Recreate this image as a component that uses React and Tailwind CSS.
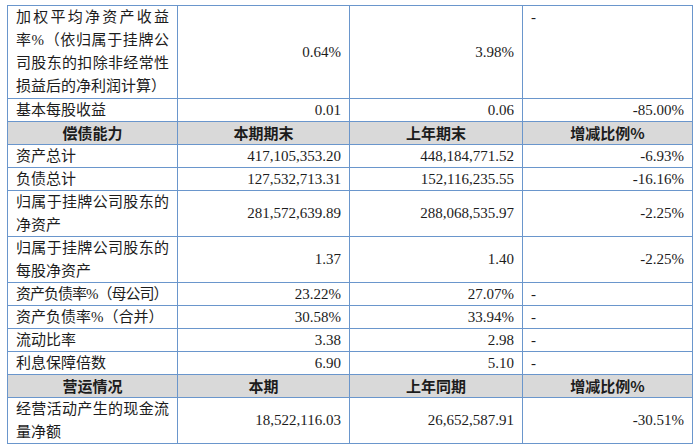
import React from "react";

const cell = "border border-[#6a96cc] px-[8px] py-0";
const num = `${cell} text-right align-middle`;

const rows = [
  { label: "基本每股收益", a: "0.01", b: "0.06", c: "-85.00%" },
];

const debt = [
  { label: "资产总计", a: "417,105,353.20", b: "448,184,771.52", c: "-6.93%" },
  { label: "负债总计", a: "127,532,713.31", b: "152,116,235.55", c: "-16.16%" },
  { label: "归属于挂牌公司股东的净资产", a: "281,572,639.89", b: "288,068,535.97", c: "-2.25%", two: true },
  { label: "归属于挂牌公司股东的每股净资产", a: "1.37", b: "1.40", c: "-2.25%", two: true },
  { label: "资产负债率%（母公司）", a: "23.22%", b: "27.07%", c: "-", tight: true },
  { label: "资产负债率%（合并）", a: "30.58%", b: "33.94%", c: "-" },
  { label: "流动比率", a: "3.38", b: "2.98", c: "-" },
  { label: "利息保障倍数", a: "6.90", b: "5.10", c: "-" },
];

const Row = ({ r }) => {
  const lead = r.two ? "leading-[22.5px]" : "leading-[22px]";
  const dash = r.c === "-";
  return (
    <tr>
      <td
        className={`${cell} ${lead} text-justify ${
          r.tight ? "whitespace-nowrap tracking-[-1px]" : ""
        }`}
      >
        {r.label}
      </td>
      <td className={`${num} ${lead}`}>{r.a}</td>
      <td className={`${num} ${lead}`}>{r.b}</td>
      <td className={`${cell} ${lead} align-middle ${dash ? "text-left" : "text-right"}`}>
        {r.c}
      </td>
    </tr>
  );
};

const Head = ({ cols }) => (
  <tr className="bg-[#d9d9d9]">
    {cols.map((c) => (
      <td
        key={c}
        className={`${cell} leading-[22px] text-center font-bold font-['Noto_Sans_CJK_SC',sans-serif] text-[15px]`}
      >
        {c}
      </td>
    ))}
  </tr>
);

export default function App() {
  return (
    <div className="w-[698px] h-[445px] bg-white pl-[7px] pt-[5px] overflow-hidden">
      <table className="w-[685px] table-fixed border-collapse text-[15px] text-[#1c1c1c] font-['Liberation_Serif','Noto_Sans_CJK_SC',serif]">
        <colgroup>
          <col className="w-[170px]" />
          <col className="w-[172px]" />
          <col className="w-[173px]" />
          <col className="w-[170px]" />
        </colgroup>
        <tbody>
          <tr>
            <td className={`${cell} leading-[23px] text-justify`}>
              加权平均净资产收益率%（依归属于挂牌公司股东的扣除非经常性损益后的净利润计算）
            </td>
            <td className={`${num} leading-[23px]`}>0.64%</td>
            <td className={`${num} leading-[23px]`}>3.98%</td>
            <td className={`${cell} leading-[23px] align-top text-left`}>-</td>
          </tr>
          {rows.map((r) => (
            <Row key={r.label} r={r} />
          ))}
          <Head cols={["偿债能力", "本期期末", "上年期末", "增减比例%"]} />
          {debt.map((r) => (
            <Row key={r.label} r={r} />
          ))}
          <Head cols={["营运情况", "本期", "上年同期", "增减比例%"]} />
          <Row
            r={{
              label: "经营活动产生的现金流量净额",
              a: "18,522,116.03",
              b: "26,652,587.91",
              c: "-30.51%",
              two: true,
            }}
          />
        </tbody>
      </table>
    </div>
  );
}
